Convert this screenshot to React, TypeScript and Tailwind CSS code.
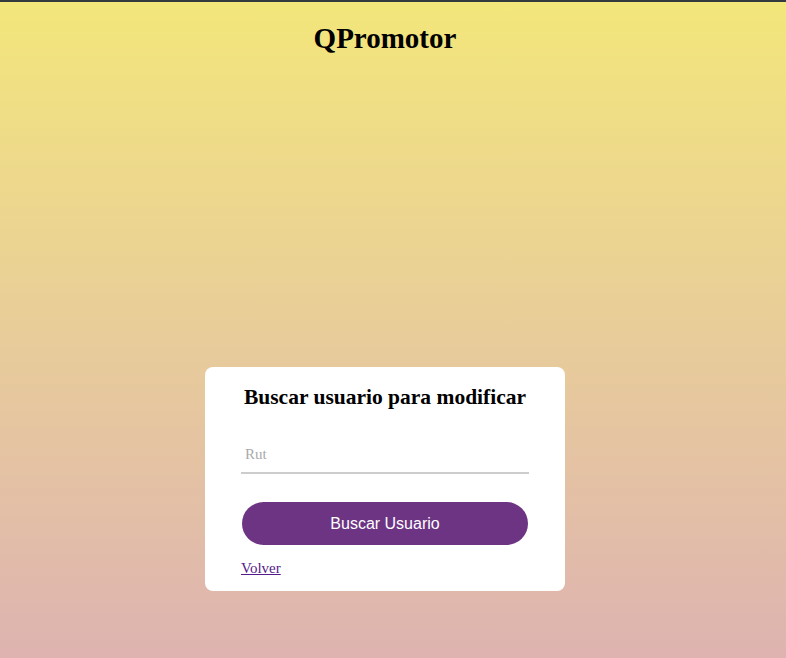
export default function App() {
  return (
    <div className="min-h-screen border-t-2 border-[#343a40] bg-gradient-to-b from-[#f3e67a] to-[#deb3b0] font-['Liberation_Serif',serif]">
      <div className="flex w-[770px] flex-col items-center">
        <h1 className="mt-[19px] text-[29px] font-bold leading-[34px] text-black">QPromotor</h1>

        <div className="mt-[312px] mb-[67px] w-[360px] rounded-[8px] bg-white px-[36px] pt-[16px] pb-[11px]">
          <h2 className="whitespace-nowrap text-center text-[21.5px] font-bold leading-[28px] text-black">
            Buscar usuario para modificar
          </h2>

          <input
            type="text"
            placeholder="Rut"
            className="mt-[33px] w-full border-b-2 border-[#cccccc] px-[4px] pb-[8px] text-[15px] leading-[20px] outline-none placeholder:text-[#aaaaaa]"
          />

          <div className="mt-[28px] px-[1px]">
            <button className="h-[43px] w-full rounded-full bg-[#6c3483] font-['Liberation_Sans',sans-serif] text-[16px] text-white">
              Buscar Usuario
            </button>
          </div>

          <div className="mt-[11px]">
            <a href="#" className="text-[15px] leading-[18px] text-[#551a8b] underline">
              Volver
            </a>
          </div>
        </div>
      </div>
    </div>
  );
}
